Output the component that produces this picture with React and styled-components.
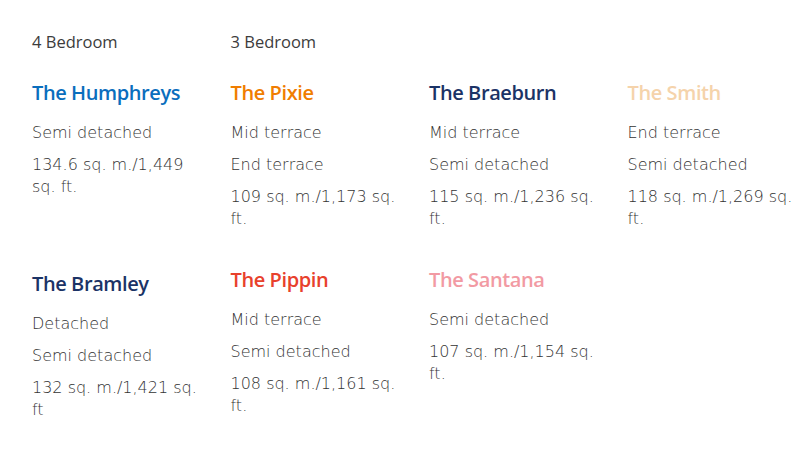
import styled, { createGlobalStyle } from "styled-components";

const Global = createGlobalStyle`
  body {
    margin: 0;
    background: #fff;
  }
`

const homes = [
    { name: "The Humphreys", color: "#0a6ebd", lines: ["Semi detached", "134.6 sq. m./1,449 sq. ft."] },
    { name: "The Pixie", color: "#f07d00", lines: ["Mid terrace", "End terrace", "109 sq. m./1,173 sq. ft."] },
    { name: "The Braeburn", color: "#1b3366", lines: ["Mid terrace", "Semi detached", "115 sq. m./1,236 sq. ft."] },
    { name: "The Smith", color: "#f5d3ab", lines: ["End terrace", "Semi detached", "118 sq. m./1,269 sq. ft."] },
    { name: "The Bramley", color: "#1b3366", lines: ["Detached", "Semi detached", "132 sq. m./1,421 sq. ft"], drop: 4 },
    { name: "The Pippin", color: "#e8412c", lines: ["Mid terrace", "Semi detached", "108 sq. m./1,161 sq. ft."] },
    { name: "The Santana", color: "#f29aa3", lines: ["Semi detached", "107 sq. m./1,154 sq. ft."] },
]

const App = () => {
    return (
        <Page>
            <Global />
            <Grid>
                <Label>4 Bedroom</Label>
                <Label>3 Bedroom</Label>
                <span />
                <span />
                {homes.map((home) => (
                    <Home key={home.name} $drop={home.drop || 0}>
                        <Name $color={home.color}>{home.name}</Name>
                        {home.lines.map((line) => (
                            <Line key={line}>{line}</Line>
                        ))}
                    </Home>
                ))}
            </Grid>
        </Page>
    )
}

const Page = styled.div`
    padding: 32px 0 0 32px;
    width: 802px;
    box-sizing: border-box;
`

const Grid = styled.div`
    display: grid;
    grid-template-columns: repeat(4, 198.5px);
`

const Label = styled.div`
    font-family: "Open Sans", sans-serif;
    font-weight: 500;
    font-size: 16.5px;
    line-height: 20px;
    color: #3c3c3c;
    margin-bottom: 27px;
`

const Home = styled.div`
    max-width: 170px;
    padding-top: ${(p) => p.$drop}px;
    margin-bottom: 26px;
`

const Name = styled.h3`
    margin: 0 0 15px;
    font-family: "Open Sans", sans-serif;
    font-weight: 600;
    font-size: 20px;
    line-height: 28px;
    letter-spacing: -0.4px;
    color: ${(p) => p.$color};
`

const Line = styled.p`
    margin: 0 0 10px;
    font-family: "DejaVu Sans", sans-serif;
    font-weight: 200;
    font-size: 16px;
    line-height: 22px;
    color: #333;
`

export default App
